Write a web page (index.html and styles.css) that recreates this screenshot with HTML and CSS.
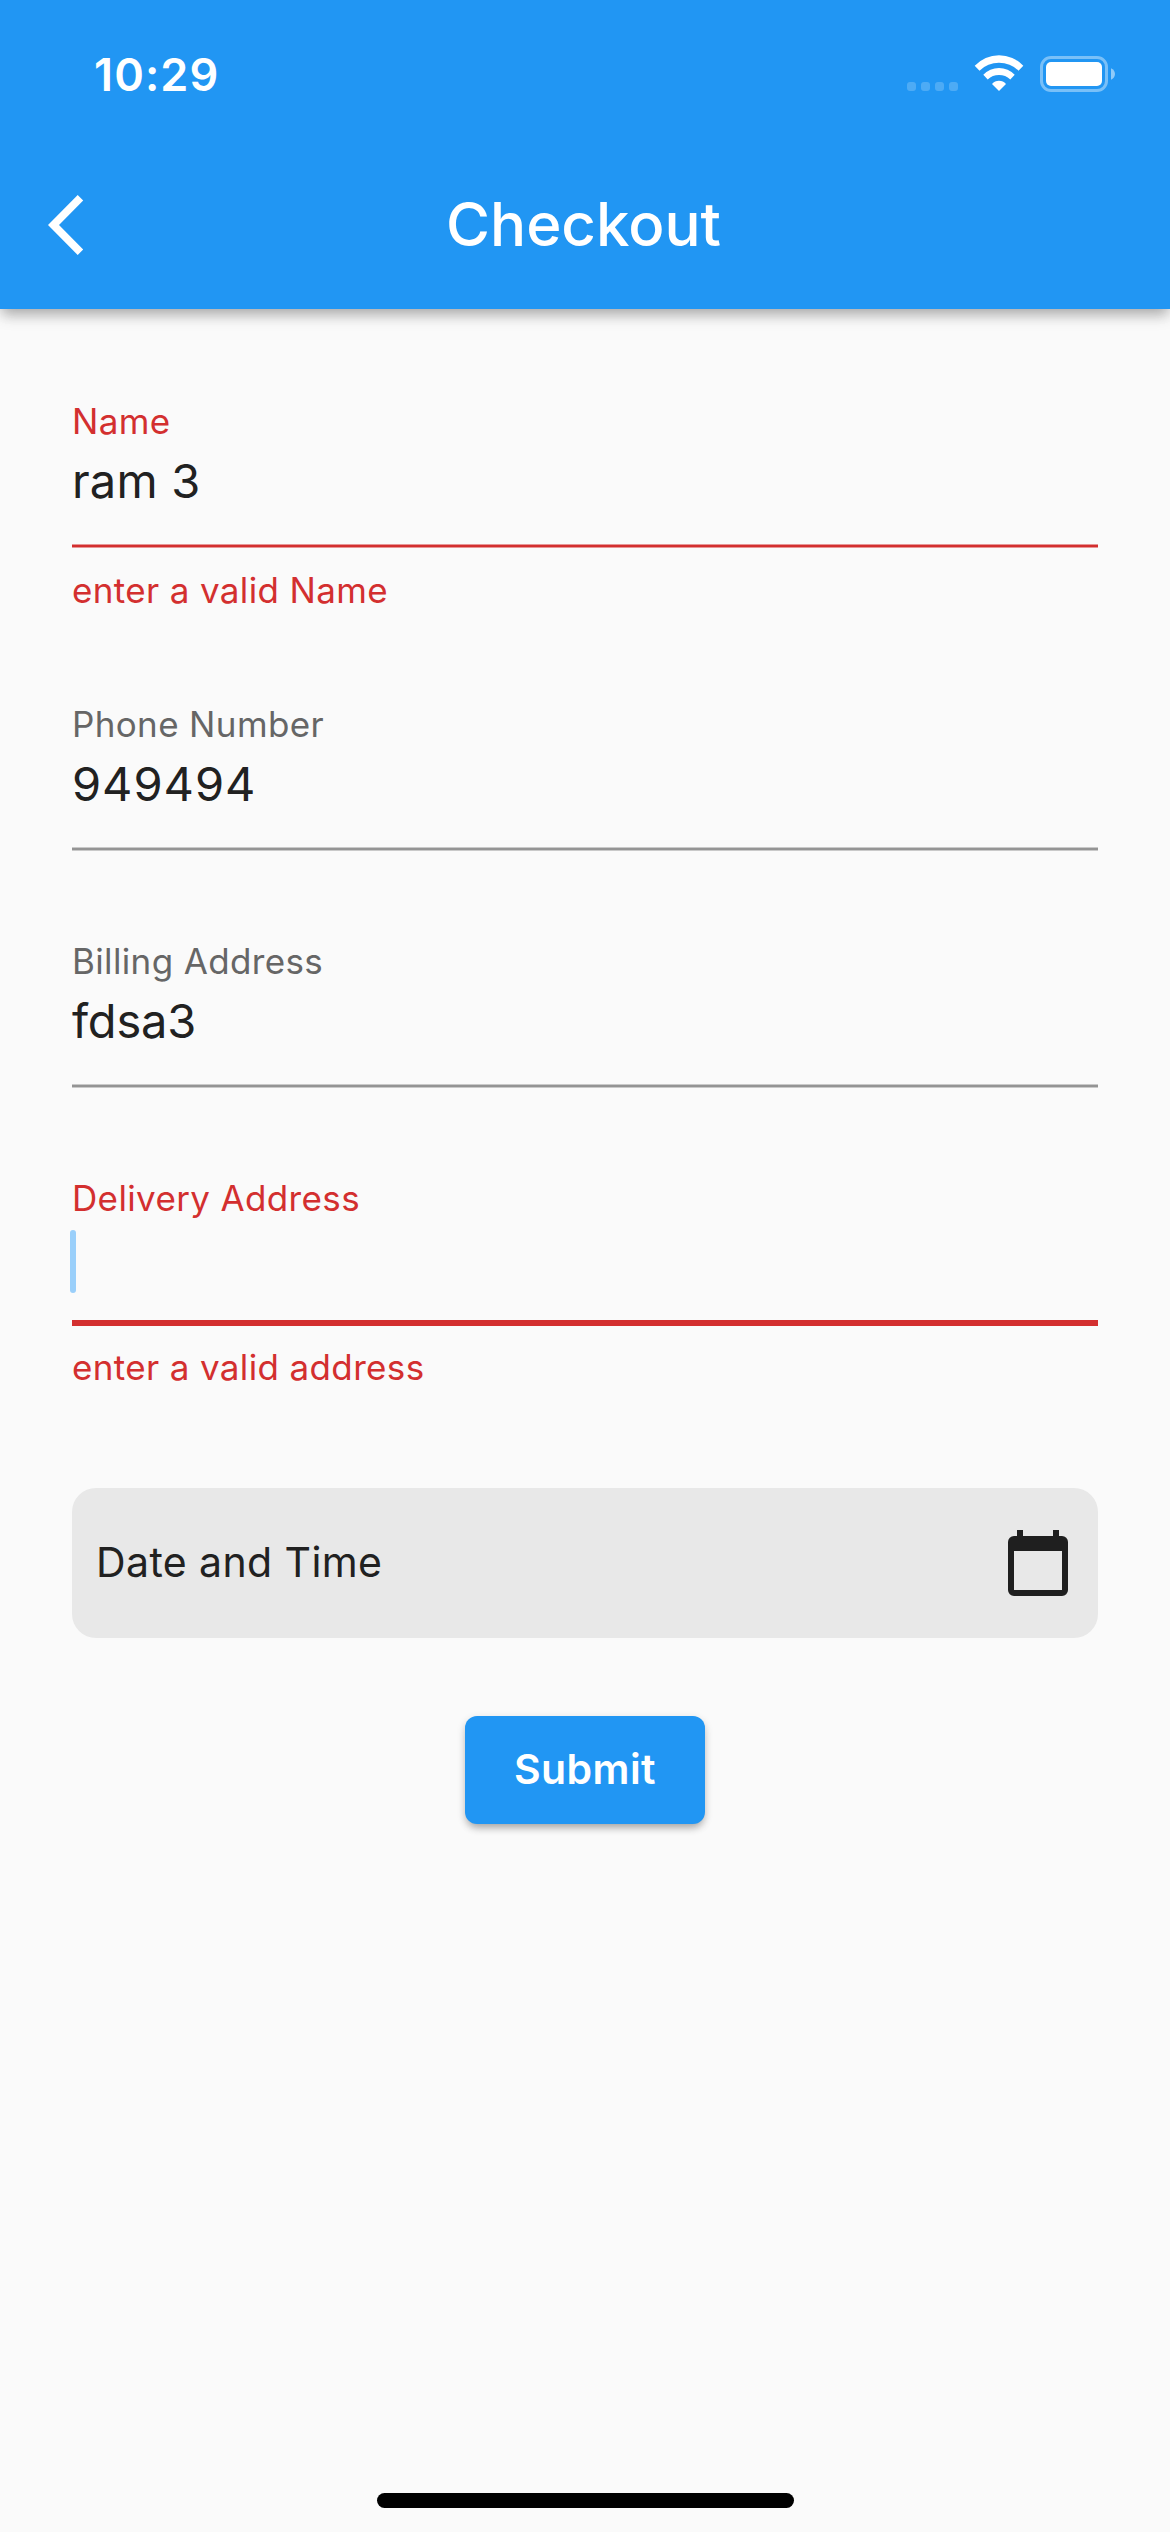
FILE: index.html
```
<!DOCTYPE html>
<html lang="en">
<head>
<meta charset="utf-8">
<title>Checkout</title>
<link rel="stylesheet" href="styles.css">
</head>
<body>
<div class="screen">
  <header class="app-bar">
    <div class="status-bar">
      <span class="time">10:29</span>
      <svg class="status-icons" width="208" height="38" viewBox="907 54 208 38" fill="#fff" aria-hidden="true">
        <g fill-opacity=".2">
          <rect x="907" y="82" width="9" height="9" rx="3"/>
          <rect x="921" y="82" width="9" height="9" rx="3"/>
          <rect x="935" y="82" width="9" height="9" rx="3"/>
          <rect x="949" y="82" width="9" height="9" rx="3"/>
        </g>
        <path d="M974.7 65.8A33 33 0 0 1 1023.3 65.8L1018.5 70.7A28 28 0 0 0 979.5 70.7Z"/>
        <path d="M983.3 74.8A21.5 21.5 0 0 1 1014.7 74.8L1010.3 79.4A17 17 0 0 0 987.7 79.4Z"/>
        <path d="M992 83.9A9.5 9.5 0 0 1 1006 83.9L999 91Z"/>
        <rect x="1041.5" y="57.5" width="65" height="33" rx="9.5" fill="none" stroke="#fff" stroke-opacity=".4" stroke-width="3"/>
        <rect x="1046" y="62" width="56" height="24" rx="5"/>
        <path d="M1111 68.2C1113.4 69.3 1115 71.5 1115 74S1113.4 78.7 1111 79.8Z" fill-opacity=".5"/>
      </svg>
    </div>
    <div class="toolbar">
      <svg class="back" width="36" height="60" viewBox="48 195 36 60" fill="#fff" aria-hidden="true">
        <path d="M48 225L77.7 195L83.2 200.6L59 225L83.2 249.4L77.7 255Z"/>
      </svg>
      <h1 class="title">Checkout</h1>
    </div>
  </header>

  <main class="form">
    <div class="field error">
      <div class="label">Name</div>
      <div class="value">ram 3</div>
      <div class="underline"></div>
      <div class="message">enter a valid Name</div>
    </div>
    <div class="field">
      <div class="label">Phone Number</div>
      <div class="value digits">949494</div>
      <div class="underline"></div>
    </div>
    <div class="field">
      <div class="label">Billing Address</div>
      <div class="value tight">fdsa3</div>
      <div class="underline"></div>
    </div>
    <div class="field error focused">
      <div class="label">Delivery Address</div>
      <div class="value"><span class="caret"></span></div>
      <div class="underline"></div>
      <div class="message">enter a valid address</div>
    </div>
    <div class="date">
      <span class="date-text">Date and Time</span>
      <svg class="calendar" width="60" height="66" viewBox="0 0 60 66" aria-hidden="true">
        <path fill="#1f1f1f" fill-rule="evenodd" d="M9 0h6v6h30V0h6v6h3a6 6 0 0 1 6 6v48a6 6 0 0 1-6 6H6a6 6 0 0 1-6-6V12a6 6 0 0 1 6-6h3ZM6 21V60H54V21Z"/>
      </svg>
    </div>
    <button class="submit" type="button">Submit</button>
  </main>

  <div class="home-indicator"></div>
</div>
</body>
</html>
```

FILE: styles.css
```
* {
  box-sizing: border-box;
}

body {
  margin: 0;
  background: #fafafa;
  font-family: Inter, "Liberation Sans", sans-serif;
  color: #212121;
}

.screen {
  display: flex;
  flex-direction: column;
  width: 1170px;
  height: 2532px;
}

.app-bar {
  flex: none;
  height: 309px;
  background: #2196f3;
  color: #fff;
  box-shadow:
    0 6px 12px -3px rgba(0, 0, 0, .2),
    0 9px 14px -1px rgba(0, 0, 0, .14),
    0 2px 18px rgba(0, 0, 0, .06);
}

.status-bar {
  display: flex;
  justify-content: space-between;
  align-items: flex-start;
  height: 141px;
  padding: 47px 55px 0 94px;
}

.time {
  font-size: 45px;
  font-weight: 600;
  line-height: 55px;
  letter-spacing: 1.1px;
}

.status-icons {
  margin-top: 7px;
}

.toolbar {
  display: grid;
  grid-template-columns: 84px 1fr 84px;
  height: 168px;
}

.back {
  margin: 54px 0 0 48px;
}

.title {
  margin: 48px 3px 0 0;
  font-size: 60px;
  font-weight: 500;
  line-height: 71px;
  letter-spacing: 0;
  text-align: center;
}

.form {
  display: flex;
  flex: 1;
  flex-direction: column;
  gap: 88px;
  padding: 90px 72px 0;
}

.label,
.message {
  font-size: 35px;
  line-height: 44px;
  letter-spacing: .36px;
}

.label {
  color: #666;
}

.value {
  position: relative;
  height: 57px;
  margin-top: 9px;
  font-size: 47px;
  line-height: 57px;
  letter-spacing: .18px;
}

.value.digits {
  letter-spacing: .97px;
}

.value.tight {
  letter-spacing: -.2px;
}

/* 3px rule centred on a pixel boundary, with half-strength outer rows */
.underline {
  height: 4px;
  margin-top: 35px;
  border: solid #c9c9c9;
  border-width: 1px 0;
  background: #949494;
}

.error .label,
.error .message {
  color: #d32f2f;
}

.error .underline {
  border-color: #e79595;
  background: #d32f2f;
}

.focused .underline {
  height: 6px;
  margin: 34px 0 -1px;
  border: 0;
}

.message {
  height: 46px;
  margin-top: 20px;
}

.caret {
  position: absolute;
  top: 1px;
  left: -2px;
  width: 6px;
  height: 63px;
  border-radius: 3px;
  background: #9acffa;
}

.date {
  display: flex;
  justify-content: space-between;
  align-items: center;
  height: 150px;
  margin-top: 9px;
  padding: 0 18px 2px 24px;
  border-radius: 24px;
  background: #e8e8e8;
}

.date-text {
  font-size: 41px;
  line-height: 50px;
  letter-spacing: .4px;
}

.calendar {
  margin: 2px 12px 0 0;
}

.submit {
  align-self: center;
  width: 240px;
  height: 108px;
  margin-top: -10px;
  padding: 0 0 2px;
  border: 0;
  border-radius: 12px;
  background: #2196f3;
  box-shadow:
    0 6px 9px -3px rgba(0, 0, 0, .25),
    0 3px 8px rgba(0, 0, 0, .16);
  color: #fff;
  font: 600 41px/50px Inter, "Liberation Sans", sans-serif;
  letter-spacing: .4px;
}

.home-indicator {
  flex: none;
  align-self: center;
  width: 417px;
  height: 15px;
  margin: 0 0 24px 1px;
  border-radius: 8px;
  background: #000;
}
```
